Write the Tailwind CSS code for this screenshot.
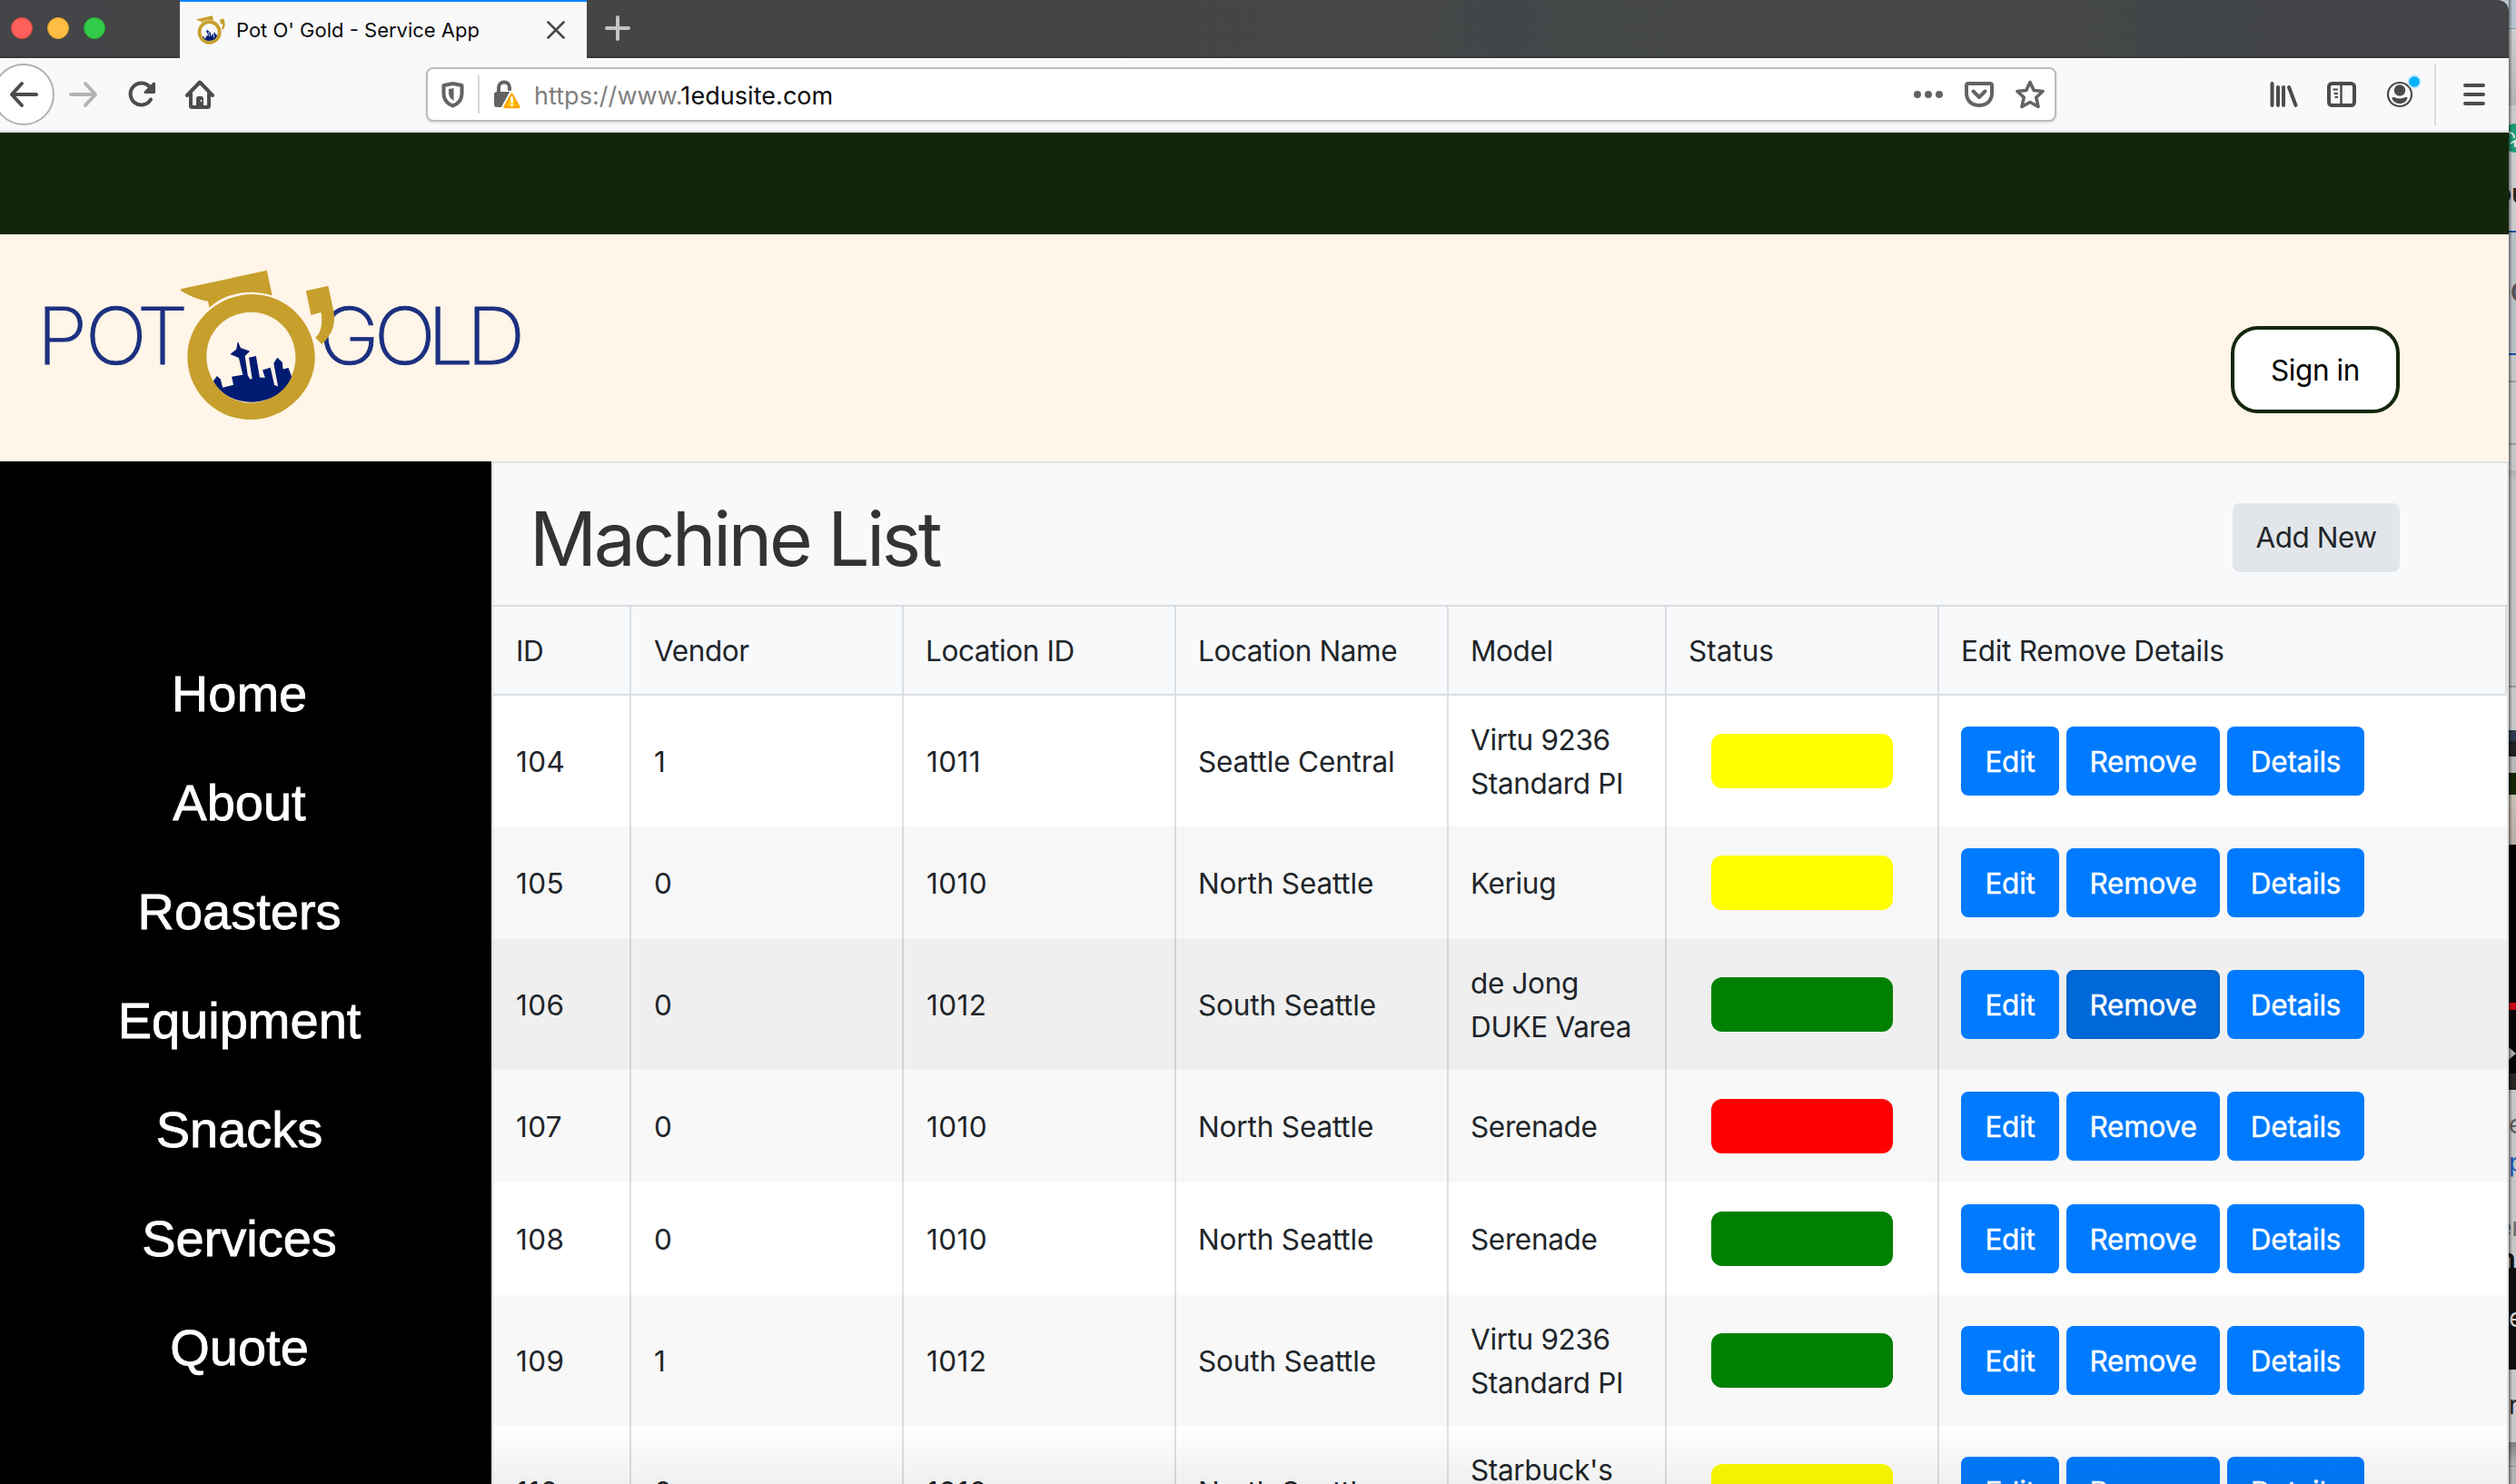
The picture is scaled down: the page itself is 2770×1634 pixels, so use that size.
<!DOCTYPE html>
<html lang="en">
<head>
<meta charset="utf-8">
<title>Pot O' Gold - Service App</title>
<script src="https://cdn.jsdelivr.net/npm/@tailwindcss/browser@4"></script>
</head>
<body class="flex h-[1634px] w-[2770px] overflow-hidden bg-[#b9c5d1] font-['Inter',sans-serif]">

<!-- shared logo artwork -->
<svg class="hidden">
  <symbol id="pot" viewBox="500 140 435 500" preserveAspectRatio="none">
    <g fill="#c79f2c">
      <path d="M503 205 L743 143 L758 226 C700 205 635 213 583 265 L579 245 C550 240 522 224 503 210 Z"/>
      <path d="M852 211 L914 194 L930 285 C935 325 920 362 896 387 L878 365 C894 350 899 318 894 282 L866 291 Z"/>
    </g>
    <path fill="#c79f2c" fill-rule="evenodd" d="M703 222 C800 222 877 320 877 430 C877 540 795 636 697 636 C600 636 522 540 522 430 C522 310 610 222 703 222 Z M700 281 C630 281 575 345 575 427 C575 510 630 580 697 580 C768 580 823 510 823 430 C823 348 768 281 700 281 Z"/>
    <path fill="#001b72" d="M594 508 L604 492 L614 502 L620 530 L650 521 L645 494 L676 488 L665 432 L641 420 L658 404 L662 377 L670 399 L696 410 L682 426 L690 490 L697 503 L702 500 L693 431 L713 426 L723 496 L738 498 L731 472 L753 464 L764 522 L774 526 L762 450 L772 431 L786 446 L788 469 L803 465 L812 493 C795 545 750 578 697 578 C652 578 612 548 594 508 Z"/>
  </symbol>
</svg>

<!-- browser window -->
<div class="flex h-full w-[2762px] shrink-0 flex-col overflow-hidden rounded-tr-[12px] bg-white">

  <!-- tab strip -->
  <div class="flex h-16 shrink-0 bg-[linear-gradient(90deg,#444548_0%,#454545_25%,#464545_45%,#434648_60%,#474846_76%,#424548_88%,#444347_100%)]">
    <div class="flex w-[198px] items-center gap-4 border-b-2 border-[#38383a] pl-3">
      <div class="size-6 rounded-full border border-[#e2463f] bg-[#ff605c]"></div>
      <div class="size-6 rounded-full border border-[#dfa123] bg-[#ffbd44]"></div>
      <div class="size-6 rounded-full border border-[#1dad2b] bg-[#33cb49]"></div>
    </div>
    <div class="flex w-[448px] items-center border-t-2 border-[#0a84ff] bg-[#f9f9fa] pl-[18px] pr-6">
      <svg class="h-8 w-8"><use href="#pot"/></svg>
      <span class="ml-3 grow whitespace-nowrap text-[22px] text-[#0c0c0d]">Pot O' Gold - Service App</span>
      <svg class="size-5" viewBox="0 0 20 20" fill="none" stroke="#4a4a4b" stroke-width="2.6" stroke-linecap="round"><path d="M1.5 1.5 18.5 18.5M18.5 1.5 1.5 18.5"/></svg>
    </div>
    <div class="flex grow items-center border-b-2 border-[#38383a] pl-5">
      <svg class="size-7" viewBox="0 0 28 28" fill="none" stroke="#c4c4c5" stroke-width="4" stroke-linecap="round"><path d="M14 2V26M2 14H26"/></svg>
    </div>
  </div>

  <!-- toolbar -->
  <div class="flex h-[82px] shrink-0 items-center border-b-2 border-[#dddedd] bg-[#f9f9fa]">
    <div class="-ml-2 flex size-[68px] shrink-0 items-center justify-center rounded-full border-2 border-[#b1b1b1] bg-white">
      <svg class="size-8" viewBox="0 0 32 32" fill="none" stroke="#4c4c4d" stroke-width="4" stroke-linecap="round" stroke-linejoin="round"><path d="M30 16H3M14 4 3 16 14 28"/></svg>
    </div>
    <svg class="ml-4 size-8" viewBox="0 0 32 32" fill="none" stroke="#b3b3b4" stroke-width="4" stroke-linecap="round" stroke-linejoin="round"><path d="M2 16H29M18 4 29 16 18 28"/></svg>
    <svg class="ml-8 size-8" viewBox="0 0 32 32" fill="none" stroke="#4c4c4d" stroke-width="4" stroke-linecap="round"><path d="M26 21.5A12 12 0 1 1 25 8"/><path d="M29.5 4V13.5H20Z" fill="#4c4c4d" stroke-width="3" stroke-linejoin="round"/></svg>
    <svg class="ml-8 size-8" viewBox="0 0 32 32" fill="none" stroke="#4c4c4d" stroke-width="4" stroke-linecap="round" stroke-linejoin="round"><path d="M2 17 16 2.500 30 17M6 15V28.500Q6 30 7.500 30H24.500Q26 30 26 28.500V15"/><path d="M12 30V21Q12 18 14.500 18H17.500Q20 18 20 21V30Z" fill="#4c4c4d" stroke="none"/><circle cx="17.500" cy="23" r="1" fill="#fff" stroke="none"/></svg>

    <div class="ml-[233px] flex h-[60px] w-[1795px] shrink-0 items-center rounded-[8px] border-2 border-[#bcbcbc] bg-white pl-[15px] pr-[11px] shadow-sm">
      <svg class="h-8 w-[25px]" viewBox="0 0 25 32" fill="none" stroke="#636364" stroke-width="4" stroke-linejoin="round"><path d="M12.500 4 22.500 6V15C22.500 22 18 27 12.500 28.500C7 27 2.500 22 2.500 15V6Z"/><path d="M13.500 9V23C9.500 20.500 8 17.500 8 14.500V10Z" fill="#636364" stroke="none"/></svg>
      <div class="ml-[15px] h-[42px] w-0.5 bg-[#d6d6d7]"></div>
      <svg class="ml-4 h-8 w-[30px]" viewBox="0 0 30 32"><path d="M5 14V8.500a6 6 0 0 1 12 0V12" fill="none" stroke="#636364" stroke-width="4"/><rect y="13" width="20" height="17" rx="3" fill="#636364"/><path d="M19.500 14 28.500 30.500H10.500Z" fill="#ffbf00" stroke="#fff" stroke-width="5" stroke-linejoin="round"/><path d="M19.500 15.500 27.500 30H11.500Z" fill="#ffbf00" stroke="#f9a300" stroke-width="2.500" stroke-linejoin="round"/><path d="M19.500 19.500V24.500" stroke="#fff" stroke-width="2.600" stroke-linecap="round"/><circle cx="19.500" cy="28" r="1.400" fill="#fff"/></svg>
      <div class="ml-[14px] grow whitespace-nowrap pt-[5px] text-[27px] tracking-[0.05px] text-[#7f7f80]">https://www.<span class="text-[#0c0c0d]">1edusite.com</span></div>
      <svg class="h-8 w-8" viewBox="0 0 32 32" fill="#636364"><circle cx="4" cy="16" r="4"/><circle cx="16" cy="16" r="4"/><circle cx="28" cy="16" r="4"/></svg>
      <svg class="ml-6 size-8" viewBox="0 0 32 32" fill="none" stroke="#636364" stroke-width="4" stroke-linecap="round" stroke-linejoin="round"><path d="M4 4H28Q30 4 30 6V14.500C30 23 24 28 16 28S2 23 2 14.500V6Q2 4 4 4Z"/><path d="M9.500 12.500 16 19 22.500 12.500"/></svg>
      <svg class="ml-6 size-8" viewBox="0 0 32 32" fill="none" stroke="#636364" stroke-width="3.600" stroke-linejoin="round"><path d="M16 2.500 20.200 11.500 30 12.500 22.800 19.300 25 29.500 16 24.500 7 29.500 9.200 19.300 2 12.500 11.800 11.500Z"/></svg>
    </div>

    <svg class="ml-[235px] h-8 w-8" viewBox="0 0 32 32" stroke="#4c4c4d" stroke-width="4" stroke-linecap="round"><path d="M2.500 4V28M9 8V28M15 8V28M21 8 28.500 28"/></svg>
    <svg class="ml-[31px] size-8" viewBox="0 0 32 32" fill="none" stroke="#4c4c4d"><rect x="2" y="4" width="28" height="24" rx="3.500" stroke-width="4"/><path d="M15.500 4V28" stroke-width="2.500"/><path d="M6.500 10.500H12M7.500 15H12M8.500 19H12" stroke-width="2"/></svg>
    <svg class="ml-[32px] h-[44px] w-[42px]" viewBox="0 0 42 44"><circle cx="16" cy="22" r="13" fill="none" stroke="#4c4c4d" stroke-width="2.200"/><circle cx="16" cy="17.500" r="6.200" fill="#4c4c4d"/><path d="M7.500 25.500C10 24 11.500 26.500 16 26.500S22 24 24.500 25.500C24 29.500 20.500 32 16 32S8 29.500 7.500 25.500Z" fill="#4c4c4d"/><circle cx="32" cy="8" r="7.500" fill="#bfeafd"/><circle cx="32" cy="8" r="5.800" fill="#00b0fa"/></svg>
    <div class="ml-[12px] h-[68px] w-0.5 bg-[#dcdcdd]"></div>
    <svg class="ml-[30px] h-8 w-6" viewBox="0 0 24 32" stroke="#4c4c4d" stroke-width="4" stroke-linecap="round"><path d="M2 6H22M2 16H22M2 26H22"/></svg>
  </div>

  <!-- site banner -->
  <div class="h-28 shrink-0 bg-[#14260a]"></div>
  <header class="flex h-[250px] shrink-0 items-center justify-between bg-[#fff5e8] pr-[120px]">
    <svg class="h-[250px] w-[620px]" viewBox="0 0 620 250">
      <g transform="scale(1.05 1)" fill="#1c3080" stroke="#1c3080" stroke-width="0.900" font-family="Inter" font-size="86" font-weight="200">
        <text y="143.500" x="38.600 89.300 143.600">POT</text>
        <text y="143.500" x="334 392.100 448.100 489.100">GOLD</text>
      </g>
      <svg x="197.700" y="38.700" width="172" height="166.700"><use href="#pot" width="172" height="166.700"/></svg>
    </svg>
    <button class="mt-12 h-24 w-[186px] rounded-[30px] border-4 border-[#15260a] bg-white pt-0.5 text-[31.5px] leading-[48px] tracking-[-0.4px] text-black">Sign in</button>
  </header>

  <!-- page body -->
  <div class="flex min-h-0 grow">
    <nav class="w-[541px] shrink-0 bg-black pt-[196px]">
      <ul id="nav" class="w-[527px] text-center font-['Liberation_Sans',sans-serif] text-[56px] leading-[120px] text-white [-webkit-text-stroke:0.8px_#fff]"></ul>
    </nav>
    <main class="relative flex w-[2221px] flex-col overflow-hidden border-l-2 border-r-2 border-t-2 border-[#dfe1e3] bg-white text-[31.5px] leading-[48px] text-[#212529]">
      <div class="flex h-[158px] shrink-0 items-center justify-between border-b-2 border-[#dadde0] bg-[#f8f9fb] pl-10 pr-[118px] pt-2">
        <h1 class="mt-1 text-[82px] leading-[100px] tracking-[-3.3px] text-[#333]">Machine List</h1>
        <button class="h-[76px] w-[184px] rounded-[8px] bg-[#e2e6ea] tracking-[-0.5px]">Add New</button>
      </div>
      <div class="grid h-[98px] shrink-0 grid-cols-[152px_300px_300px_300px_240px_300px_1fr] border-b-2 border-r-2 border-[#dadfe4] bg-[#f8f9fb] tracking-[-0.4px]">
        <div class="flex items-center border-r-2 border-[#dadfe4] pl-[25px] pt-0.5">ID</div>
        <div class="flex items-center border-r-2 border-[#dadfe4] pl-[25px] pt-0.5">Vendor</div>
        <div class="flex items-center border-r-2 border-[#dadfe4] pl-6 pt-0.5">Location ID</div>
        <div class="flex items-center border-r-2 border-[#dadfe4] pl-6 pt-0.5">Location Name</div>
        <div class="flex items-center border-r-2 border-[#dadfe4] pl-6 pt-0.5">Model</div>
        <div class="flex items-center border-r-2 border-[#dadfe4] pl-6 pt-0.5 tracking-[0px]">Status</div>
        <div class="flex items-center pl-6 pt-0.5 tracking-[-0.25px]">Edit Remove Details</div>
      </div>
      <div id="rows" class="flex flex-col"></div>
      <div class="absolute inset-x-0 bottom-0 h-16 bg-linear-to-b from-black/0 to-black/6"></div>
    </main>
  </div>
</div>

<!-- sliver of the windows behind -->
<div class="relative flex w-2 shrink-0 flex-col overflow-hidden bg-[#c6c6c6]">
  <div class="h-8 border-b border-[#8f98a1] bg-[#b9c5d1]"></div>
  <div class="h-[84px] bg-linear-to-b from-[#cdcdcd] to-[#b4b4b5]"></div>
  <div class="h-[138px] bg-[#cbcbcb]"></div>
  <div class="h-[137px] border-y-2 border-[#1550a8] bg-[#b9c0c4]"></div>
  <div class="h-[28px] bg-[#c6c6c6]"></div>
  <div class="h-[71px] border-y-2 border-[#9a9a9a] bg-[#c6c6c6]"></div>
  <div class="h-[28px] bg-[#c6c6c6]"></div>
  <div class="h-[237px] bg-linear-to-b from-[#b0b0b0] via-[#c3c3c3] via-5% to-[#c3c3c3]"></div>
  <div class="h-[49px] border-t-2 border-[#9a9a9a] bg-[#c9c9c9]"></div>
  <div class="h-[12px] bg-[#2c3a4c]"></div>
  <div class="h-[17px] bg-[#202124]"></div>
  <div class="h-[18px] bg-[#b8b8b8]"></div>
  <div class="h-[24px] bg-[#152806]"></div>
  <div class="h-[55px] bg-linear-to-b from-[#c6bfb4] to-[#b9ada6]"></div>
  <div class="h-[174px] bg-black"></div>
  <div class="h-[8px] bg-[#cc0a16]"></div>
  <div class="h-[70px] bg-[#050505]"></div>
  <div class="h-[18px] bg-[#2a2422]"></div>
  <div class="h-[196px] bg-[#c6c6c6]"></div>
  <div class="h-[112px] bg-[#0f0f0f]"></div>
  <div class="h-[80px] bg-[#c9c9c9]"></div>
  <div class="h-[27px] border-b border-[#8d8d8d] bg-linear-to-b from-[#808080] to-[#b5b5b5]"></div>
  <div class="grow bg-[#b5b5b5]"></div>
  <svg class="absolute left-0 top-0 h-[1634px] w-2" viewBox="0 0 8 1634">
    <circle cx="8" cy="152" r="16" fill="#1f9a78"/>
    <path d="M0 146Q6 146 6 152M2 158 7 155V162" fill="none" stroke="#d8e6e0" stroke-width="2"/>
    <path d="M0 1153 8 1160 0 1167Z" fill="#b0b0b0"/>
    <g font-family="Inter" font-size="28">
      <text x="-14" y="223" font-weight="700" fill="#26262a">ou</text>
      <text x="2" y="332" font-weight="700" fill="#505255">C</text>
      <text x="0" y="1248" fill="#5c5c5c">e</text>
      <text x="0" y="1290" fill="#1a56b8">p</text>
      <text x="-13" y="1361" fill="#6a6a6a">er</text>
      <text x="-10" y="1396" font-weight="700" fill="#111">nn</text>
      <text x="0" y="1461" fill="#d8d8d8">e</text>
      <text x="0" y="1557" fill="#222">r</text>
    </g>
  </svg>
  <div class="absolute inset-y-0 left-0 w-1 bg-linear-to-r from-black/45 to-black/0"></div>
</div>

<script>
const links = ['Home', 'About', 'Roasters', 'Equipment', 'Snacks', 'Services', 'Quote'];
document.getElementById('nav').innerHTML = links.map(l => `<li>${l}</li>`).join('');

const status = { yellow: 'bg-[#ffff00]', green: 'bg-[#008000]', red: 'bg-[#ff0000]' };
const machines = [
  ['104', '1', '1011', 'Seattle Central', 'Virtu 9236<br>Standard PI', 'yellow', 'h-[144px] bg-white'],
  ['105', '0', '1010', 'North Seattle', 'Keriug', 'yellow', 'h-[124px] bg-[#f7f7f7]'],
  ['106', '0', '1012', 'South Seattle', 'de Jong<br>DUKE Varea', 'green', 'h-[144px] bg-[#efefef]'],
  ['107', '0', '1010', 'North Seattle', 'Serenade', 'red', 'h-[124px] bg-[#f8f8f8]'],
  ['108', '0', '1010', 'North Seattle', 'Serenade', 'green', 'h-[124px] bg-white'],
  ['109', '1', '1012', 'South Seattle', 'Virtu 9236<br>Standard PI', 'green', 'h-[144px] bg-[#f8f8f8]'],
  ['110', '0', '1010', 'North Seattle', "Starbuck's<br>Serenade", 'yellow', 'h-[144px] bg-white'],
];
const cell = c => `<div class="flex items-center border-r-2 border-black/12 pl-6 pt-0.5 tracking-[-0.15px]">${c}</div>`;
const num = c => `<div class="flex items-center border-r-2 border-black/12 pl-[25px] pt-0.5 tracking-[0.4px]">${c}</div>`;
document.getElementById('rows').innerHTML = machines.map(([id, vendor, loc, name, model, st, row]) => `
  <div class="grid shrink-0 grid-cols-[152px_300px_300px_300px_240px_300px_1fr] ${row}">
    ${num(id)}${num(vendor)}${num(loc)}${cell(name)}${cell(`<span class="whitespace-nowrap tracking-[-0.35px]">${model}</span>`)}
    <div class="flex items-center border-r-2 border-black/12 pl-[49px]"><div class="h-[60px] w-[200px] rounded-[12px] ${status[st]}"></div></div>
    <div class="flex items-center gap-2 pl-6 tracking-[-0.25px] text-white">
      <button class="h-[76px] w-[108px] rounded-[8px] bg-[#007bff] pt-0.5 [-webkit-text-stroke:0.4px_#fff]">Edit</button>
      <button class="h-[76px] w-[169px] rounded-[8px] pt-0.5 [-webkit-text-stroke:0.4px_#fff] ${id === '106' ? 'border-2 border-[#0062cc] bg-[#0069d9]' : 'bg-[#007bff]'}">Remove</button>
      <button class="h-[76px] w-[151px] rounded-[8px] bg-[#007bff] pt-0.5 [-webkit-text-stroke:0.4px_#fff]">Details</button>
    </div>
  </div>`).join('');
</script>
</body>
</html>
